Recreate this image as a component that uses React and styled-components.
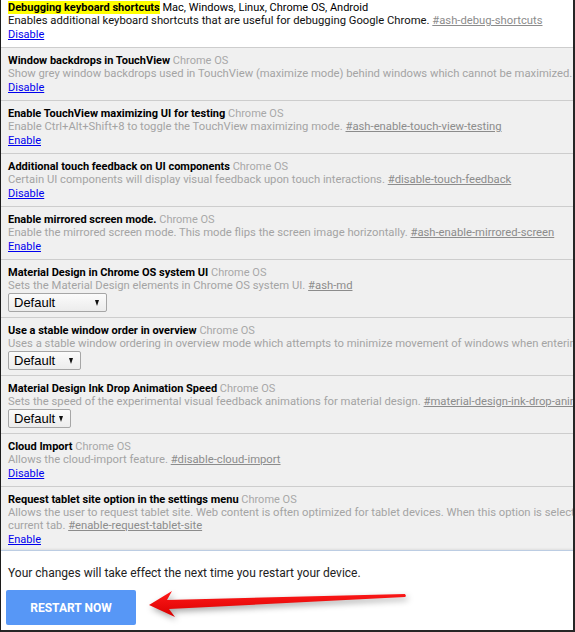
import styled, { createGlobalStyle } from "styled-components";

const GlobalStyle = createGlobalStyle`
  body {
    margin: 0;
    background: #fff;
    font-family: Roboto, "Noto Sans", "Liberation Sans", sans-serif;
  }
`;

const Frame = styled.div`
  width: 575px;
  height: 632px;
  box-sizing: border-box;
  border-left: 1px solid #1c1c1c;
  border-right: 2px solid #262626;
  border-bottom: 2px solid #262626;
  display: flex;
  flex-direction: column;
  overflow: hidden;
  background: #fff;
`;

const ListViewport = styled.div`
  flex: 1;
  min-height: 0;
  overflow: hidden;
`;

const List = styled.div`
  margin-top: -5px;
`;

const Row = styled.div`
  padding: 6px 7px 5px;
  border-bottom: 1px solid #cdcdcd;
  background: ${(p) => (p.$supported ? "#fff" : "#f0f0f0")};
  white-space: nowrap;
  font-size: 11px;
  line-height: 13px;
`;

const Title = styled.div`
  color: #000;
`;

const Name = styled.span`
  font-weight: bold;
  background: ${(p) => (p.$highlight ? "#ffff00" : "transparent")};
`;

const Platforms = styled.span`
  color: ${(p) => (p.$supported ? "#000" : "#a8a8a8")};
`;

const Description = styled.div`
  font-size: 11.25px;
  color: ${(p) => (p.$supported ? "#111" : "#a4a4a4")};
`;

const Hash = styled.a`
  color: #8c8c8c;
  text-decoration: underline;
`;

const Action = styled.a`
  display: inline-block;
  margin-top: 1px;
  line-height: 14px;
  color: #0000ee;
  text-decoration: underline;
`;

const SelectBox = styled.div`
  margin-top: 1px;
  width: ${(p) => p.$width}px;
  height: 19px;
  box-sizing: border-box;
  display: flex;
  align-items: center;
  justify-content: space-between;
  padding: 0 7px 0 5px;
  border: 1px solid #a6a6a6;
  border-radius: 2px;
  background: linear-gradient(#fbfbfb, #ececec);
  font-family: "Liberation Sans", Arial, sans-serif;
  font-size: 13px;
  color: #000;
`;

const Caret = styled.span`
  width: 0;
  height: 0;
  border-left: 2.5px solid transparent;
  border-right: 2.5px solid transparent;
  border-top: 6px solid #111;
`;

const Footer = styled.div`
  position: relative;
  flex: none;
  padding: 14px 5px 5px;
  border-top: 1px solid #bccde3;
  box-shadow: 0 -1px 2px rgba(0, 0, 0, 0.08);
  background: #fff;
`;

const Notice = styled.div`
  font-size: 12px;
  line-height: 16px;
  color: #222;
  padding-left: 2px;
`;

const RestartButton = styled.button`
  margin-top: 9px;
  width: 130px;
  height: 35px;
  border: none;
  border-radius: 2px;
  background: #5797f6;
  color: #fff;
  font-family: Roboto, sans-serif;
  font-weight: bold;
  font-size: 12px;
`;

const Arrow = styled.svg`
  position: absolute;
  left: 140px;
  top: 34px;
  width: 275px;
  height: 40px;
  overflow: visible;
  filter: drop-shadow(2px 3px 3px rgba(0, 0, 0, 0.35));
`;

const flags = [
  {
    name: "Debugging keyboard shortcuts",
    platforms: "Mac, Windows, Linux, Chrome OS, Android",
    desc: ["Enables additional keyboard shortcuts that are useful for debugging Google Chrome."],
    hash: "#ash-debug-shortcuts",
    action: "Disable",
    supported: true,
    highlight: true,
  },
  {
    name: "Window backdrops in TouchView",
    desc: ["Show grey window backdrops used in TouchView (maximize mode) behind windows which cannot be maximized."],
    hash: "#ash-enable-touchview-window-backdrops",
    action: "Disable",
  },
  {
    name: "Enable TouchView maximizing UI for testing",
    desc: ["Enable Ctrl+Alt+Shift+8 to toggle the TouchView maximizing mode."],
    hash: "#ash-enable-touch-view-testing",
    action: "Enable",
  },
  {
    name: "Additional touch feedback on UI components",
    desc: ["Certain UI components will display visual feedback upon touch interactions."],
    hash: "#disable-touch-feedback",
    action: "Disable",
  },
  {
    name: "Enable mirrored screen mode.",
    desc: ["Enable the mirrored screen mode. This mode flips the screen image horizontally."],
    hash: "#ash-enable-mirrored-screen",
    action: "Enable",
  },
  {
    name: "Material Design in Chrome OS system UI",
    desc: ["Sets the Material Design elements in Chrome OS system UI."],
    hash: "#ash-md",
    select: 99,
  },
  {
    name: "Use a stable window order in overview",
    desc: ["Uses a stable window ordering in overview mode which attempts to minimize movement of windows when entering and exiting overview mode."],
    hash: "#ash-enable-stable-overview-order",
    select: 73,
  },
  {
    name: "Material Design Ink Drop Animation Speed",
    desc: ["Sets the speed of the experimental visual feedback animations for material design."],
    hash: "#material-design-ink-drop-animation-speed",
    select: 63,
  },
  {
    name: "Cloud Import",
    desc: ["Allows the cloud-import feature."],
    hash: "#disable-cloud-import",
    action: "Disable",
  },
  {
    name: "Request tablet site option in the settings menu",
    desc: [
      "Allows the user to request tablet site. Web content is often optimized for tablet devices. When this option is selected the user agent string is changed to indicate a tablet device. Web content optimized for tablets is received thereafter for the",
      "current tab.",
    ],
    hash: "#enable-request-tablet-site",
    action: "Enable",
  },
];

const Flag = ({ flag }) => {
  const last = flag.desc.length - 1;
  return (
    <Row $supported={flag.supported}>
      <Title>
        <Name $highlight={flag.highlight}>{flag.name}</Name>{" "}
        <Platforms $supported={flag.supported}>{flag.platforms || "Chrome OS"}</Platforms>
      </Title>
      {flag.desc.map((line, i) => (
        <Description key={i} $supported={flag.supported}>
          {line}
          {i === last && (
            <>
              {" "}
              <Hash href={flag.hash}>{flag.hash}</Hash>
            </>
          )}
        </Description>
      ))}
      {flag.select ? (
        <SelectBox $width={flag.select}>
          <span>Default</span>
          <Caret />
        </SelectBox>
      ) : (
        <Action href="#">{flag.action}</Action>
      )}
    </Row>
  );
};

export default function App() {
  return (
    <>
      <GlobalStyle />
      <Frame>
        <ListViewport>
          <List>
            {flags.map((f) => (
              <Flag key={f.name} flag={f} />
            ))}
          </List>
        </ListViewport>
        <Footer>
          <Notice>Your changes will take effect the next time you restart your device.</Notice>
          <RestartButton>RESTART NOW</RestartButton>
          <Arrow viewBox="0 0 275 40">
            <defs>
              <linearGradient id="arrowRed" x1="0" y1="0" x2="0" y2="1">
                <stop offset="0" stopColor="#ff1a1a" />
                <stop offset="1" stopColor="#d90000" />
              </linearGradient>
            </defs>
            <polygon
              points="8,20 31,6 26,15 264,9 265,11 264,12 28,24 34,32"
              fill="url(#arrowRed)"
            />
          </Arrow>
        </Footer>
      </Frame>
    </>
  );
}
